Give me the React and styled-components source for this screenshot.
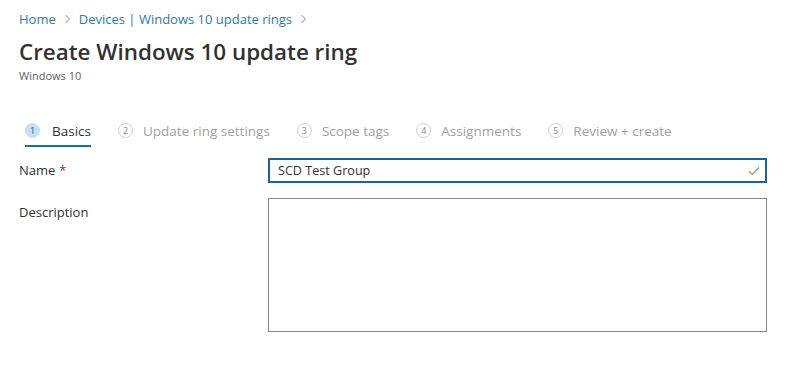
import React from 'react'
import styled, { createGlobalStyle } from 'styled-components'

const GlobalStyle = createGlobalStyle`
  body {
    margin: 0;
    background: #ffffff;
    font-family: "Open Sans", "Noto Sans", sans-serif;
    color: #323130;
  }
`

const Page = styled.div`
  width: 787px;
  height: 369px;
  padding: 10px 19px 0 19px;
  box-sizing: border-box;
  overflow: hidden;
`

const Breadcrumb = styled.nav`
  display: flex;
  align-items: center;
  gap: 8px;
  font-size: 13px;
  height: 18px;
  color: #2b79b3;
`

const Crumb = styled.a`
  color: #2b79b3;
  text-decoration: none;
`

const Chevron = styled.span`
  display: inline-flex;
  color: #8a8886;
`

const Title = styled.h1`
  margin: 9px 0 0 0;
  font-size: 22.4px;
  font-weight: 600;
  line-height: 30px;
  color: #323130;
`

const Subtitle = styled.div`
  margin-top: 2px;
  font-size: 11px;
  color: #605e5c;
  line-height: 14px;
`

const Tabs = styled.div`
  display: flex;
  align-items: stretch;
  margin-top: 34px;
  margin-left: 6px;
  gap: 27px;
`

const Tab = styled.div`
  display: flex;
  align-items: center;
  gap: ${p => (p.active ? 12 : 10)}px;
  height: 30px;
  padding-bottom: 1px;
  border-bottom: 2px solid ${p => (p.active ? '#1b6f92' : 'transparent')};
  font-size: 13.5px;
  color: ${p => (p.active ? '#323130' : '#a19f9d')};
  box-sizing: border-box;
`

const StepNum = styled.span`
  width: 15px;
  height: 15px;
  border-radius: 50%;
  box-sizing: border-box;
  display: inline-flex;
  align-items: center;
  justify-content: center;
  font-size: 9px;
  background: ${p => (p.active ? '#c7e0f4' : '#ffffff')};
  border: 1px solid ${p => (p.active ? '#c7e0f4' : '#d2d0ce')};
  color: ${p => (p.active ? '#1f4e79' : '#8a8886')};
`

const Form = styled.div`
  display: grid;
  grid-template-columns: 249px 499px;
  row-gap: 15px;
  margin-top: 11px;
`

const Label = styled.label`
  font-size: 13px;
  color: #323130;
  font-weight: 500;
  padding-top: ${p => p.pt || 3}px;
`

const Required = styled.span`
  color: #a4262c;
  margin-left: 4px;
`

const InputWrap = styled.div`
  display: flex;
  align-items: center;
  height: 25px;
  border: 2px solid #1f6391;
  box-sizing: border-box;
  padding: 0 5px 0 8px;
`

const Input = styled.input`
  flex: 1;
  border: none;
  outline: none;
  font-family: inherit;
  font-size: 12.6px;
  color: #323130;
  padding: 0;
  background: transparent;
`

const TextArea = styled.textarea`
  height: 134px;
  border: 1px solid #8a8886;
  box-sizing: border-box;
  resize: none;
  font-family: inherit;
  font-size: 13px;
  outline: none;
`

const ChevronIcon = () => (
  <svg width="7" height="10" viewBox="0 0 7 10">
    <path d="M1.5 1 L5.5 5 L1.5 9" fill="none" stroke="currentColor" strokeWidth="1" />
  </svg>
)

const CheckIcon = () => (
  <svg width="12" height="10" viewBox="0 0 12 10">
    <path d="M1 5.5 L4.2 8.5 L11 1.5" fill="none" stroke="#6bb04d" strokeWidth="1.2" />
  </svg>
)

const steps = ['Basics', 'Update ring settings', 'Scope tags', 'Assignments', 'Review + create']

const App = () => (
  <Page>
    <GlobalStyle />
    <Breadcrumb>
      <Crumb>Home</Crumb>
      <Chevron><ChevronIcon /></Chevron>
      <Crumb>Devices | Windows 10 update rings</Crumb>
      <Chevron><ChevronIcon /></Chevron>
    </Breadcrumb>
    <Title>Create Windows 10 update ring</Title>
    <Subtitle>Windows 10</Subtitle>
    <Tabs>
      {steps.map((s, i) => (
        <Tab key={s} active={i === 0}>
          <StepNum active={i === 0}>{i + 1}</StepNum>
          {s}
        </Tab>
      ))}
    </Tabs>
    <Form>
      <Label>Name<Required>*</Required></Label>
      <InputWrap>
        <Input defaultValue="SCD Test Group" />
        <CheckIcon />
      </InputWrap>
      <Label pt={5}>Description</Label>
      <TextArea />
    </Form>
  </Page>
)

export default App
